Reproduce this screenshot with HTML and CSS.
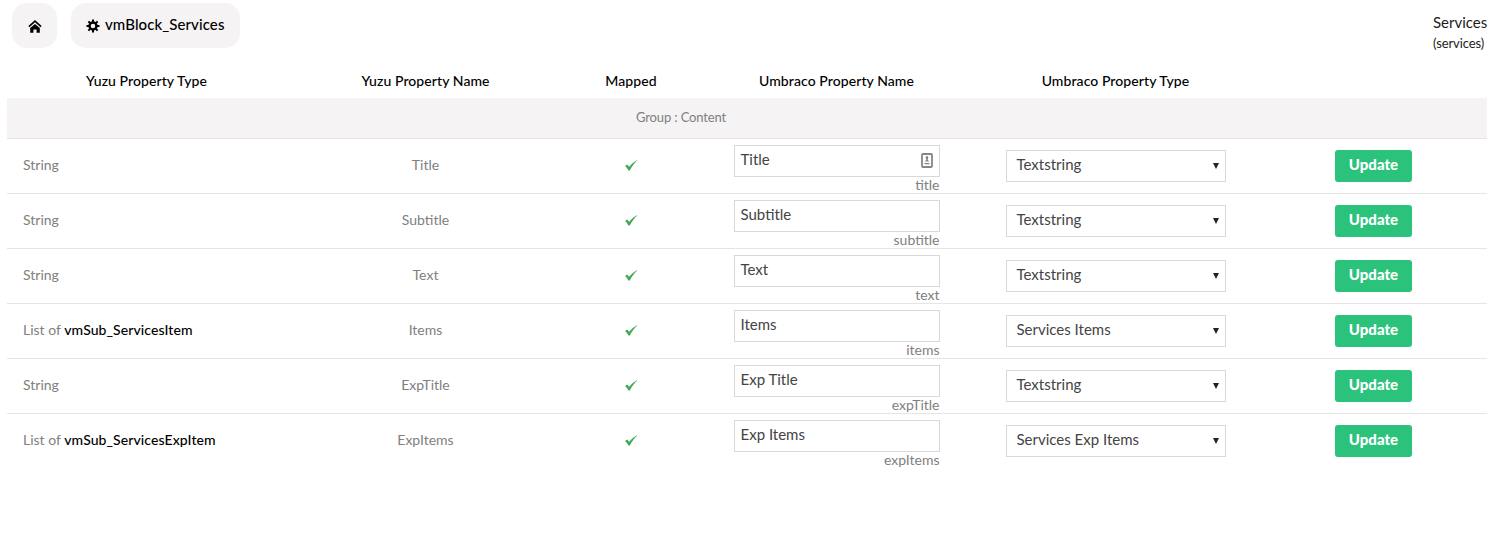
FILE: index.html
```
<!DOCTYPE html>
<html lang="en">
<head>
<meta charset="utf-8">
<title>vmBlock_Services</title>
<link rel="stylesheet" href="styles.css">
</head>
<body>
<svg width="0" height="0" class="defs">
  <symbol id="check" viewBox="0 0 14 12"><path d="M1 6 3.200 4.500 5.200 6.800C7.200 4.200 9.600 1.900 12.900.2L13.300.6C10.300 3.200 8 6.400 5.800 10.600H4.400C3.600 8.800 2.500 7.200 1 6Z" fill="#45a857"/></symbol>
</svg>
<header class="top">
  <nav class="crumbs">
    <a class="pill home"><svg width="14" height="13" viewBox="0 0 14 13"><path d="M.9 6.700 7 1.200l6.100 5.500" fill="none" stroke="#000" stroke-width="1.600"/><path d="M2.200 8.100 7 3.900l4.800 4.200V12.700H8.600V9.500H5.400v3.200H2.200Z"/></svg></a>
    <a class="pill"><svg width="14" height="14" viewBox="-7 -7 14 14"><circle r="3.500" fill="none" stroke="#000" stroke-width="2.400"/><path d="M-1-6.500h2v2.500h-2zM-1 4h2v2.500h-2zM-6.500-1h2.500v2h-2.500zM4-1h2.500v2h-2.500z"/><path transform="rotate(45)" d="M-1-6.500h2v2.500h-2zM-1 4h2v2.500h-2zM-6.500-1h2.500v2h-2.500zM4-1h2.500v2h-2.500z"/></svg><span>vmBlock_Services</span></a>
  </nav>
  <div class="doc"><div>Services</div><small>(services)</small></div>
</header>
<main class="table">
  <div class="row head"><div>Yuzu Property Type</div><div>Yuzu Property Name</div><div>Mapped</div><div>Umbraco Property Name</div><div>Umbraco Property Type</div></div>
  <div class="group"><span>Group : Content</span></div>
  <div class="row"><div class="type">String</div><div>Title</div><div><svg class="check"><use href="#check"/></svg></div><div class="name"><div class="field">Title<svg width="12" height="15" viewBox="0 0 12 15"><rect x="1" y="1" width="10" height="13" rx="1" fill="#fff" stroke="#858585" stroke-width="1.800"/><circle cx="6" cy="4.500" r="1.300" fill="#777"/><path d="M5.200 5h1.600v2L8.500 8.500h-5L5.200 7zM3.500 10h5v1.200h-5z" fill="#858585"/></svg></div><div class="alias">title</div></div><div><div class="select">Textstring<i></i></div></div><div class="action"><a class="btn">Update</a></div></div>
  <div class="row"><div class="type">String</div><div>Subtitle</div><div><svg class="check"><use href="#check"/></svg></div><div class="name"><div class="field">Subtitle</div><div class="alias">subtitle</div></div><div><div class="select">Textstring<i></i></div></div><div class="action"><a class="btn">Update</a></div></div>
  <div class="row"><div class="type">String</div><div>Text</div><div><svg class="check"><use href="#check"/></svg></div><div class="name"><div class="field">Text</div><div class="alias">text</div></div><div><div class="select">Textstring<i></i></div></div><div class="action"><a class="btn">Update</a></div></div>
  <div class="row"><div class="type">List of <b>vmSub_ServicesItem</b></div><div>Items</div><div><svg class="check"><use href="#check"/></svg></div><div class="name"><div class="field">Items</div><div class="alias">items</div></div><div><div class="select">Services Items<i></i></div></div><div class="action"><a class="btn">Update</a></div></div>
  <div class="row"><div class="type">String</div><div>ExpTitle</div><div><svg class="check"><use href="#check"/></svg></div><div class="name"><div class="field">Exp Title</div><div class="alias">expTitle</div></div><div><div class="select">Textstring<i></i></div></div><div class="action"><a class="btn">Update</a></div></div>
  <div class="row"><div class="type">List of <b>vmSub_ServicesExpItem</b></div><div>ExpItems</div><div><svg class="check"><use href="#check"/></svg></div><div class="name"><div class="field">Exp Items</div><div class="alias">expItems</div></div><div><div class="select">Services Exp Items<i></i></div></div><div class="action"><a class="btn">Update</a></div></div>
</main>
</body>
</html>
```
FILE: styles.css
```
* { box-sizing: border-box; }
body { margin: 0; background: #fff; color: #808080; font: 14px/20px Lato, sans-serif; overflow: hidden; }
.defs { display: block; }
.top { display: flex; justify-content: space-between; height: 64px; padding: 3px 18px 0 12px; color: #000; }
.crumbs { display: flex; gap: 14px; }
.pill { display: flex; align-items: center; gap: 5px; height: 45px; padding: 0 15px; border-radius: 15px; background: #f5f3f4; font-size: 15px; font-weight: 500; letter-spacing: .09px; }
.pill span { padding-bottom: 3px; }
.pill svg { margin-top: 1px; }
.home { width: 45px; justify-content: center; padding: 0; }
.doc { width: 54px; padding-top: 9px; font-size: 15px; white-space: nowrap; color: #1c1c1c; }
.doc small { display: block; font-size: 13px; line-height: 22px; letter-spacing: -.1px; }
.table { width: 1480px; margin-left: 7px; }
.row { display: grid; grid-template-columns: 279px 279px 132px 279px 279px 232px; height: 55px; border-top: 1px solid #e5e5e5; text-align: center; line-height: 52px; }
.head { height: 34px; border: 0; line-height: 34px; color: #000; font-weight: 500; letter-spacing: .08px; }
.group { height: 40px; line-height: 39px; background: #f5f3f4; padding-left: 629px; font-size: 13px; letter-spacing: -.13px; }
.type { padding-left: 16px; text-align: left; }
.type b { color: #000; font-weight: 500; letter-spacing: .09px; }
.check { display: inline-block; width: 14px; height: 12px; vertical-align: middle; }
.name { padding: 6px 36px 0 37px; line-height: 16px; }
.field { display: flex; justify-content: space-between; height: 32px; padding: 0 6px 0 5.5px; border: 1px solid #d8d7d9; line-height: 27px; font-size: 15px; color: #444; text-align: left; }
.field svg { margin-top: 7px; }
.alias { padding-right: .5px; text-align: right; font-size: 14px; }
.select { display: flex; justify-content: space-between; align-items: center; width: 220px; height: 32px; margin: 11px 0 0 30px; padding: 0 6px 3px 9.5px; border: 1px solid #d8d7d9; line-height: 27px; font-size: 15px; color: #444; }
.select i { margin-top: 3px; border: solid transparent; border-width: 6px 3px 0; border-top-color: #222; }
.action { padding: 11px 0 0 80px; text-align: left; }
.btn { display: block; width: 77px; height: 32px; border-radius: 3px; background: #2bc37c; color: #fff; font-size: 15px; font-weight: 900; line-height: 29px; text-align: center; }
```
